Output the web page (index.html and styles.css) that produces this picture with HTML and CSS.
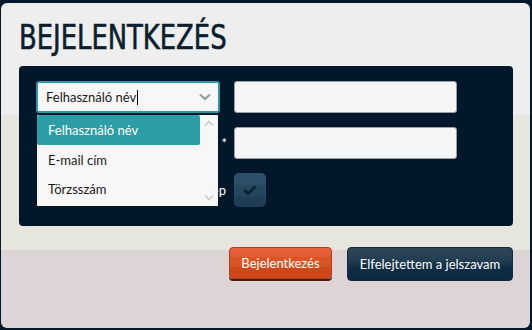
FILE: index.html
```html
<!DOCTYPE html>
<html lang="hu">
<head>
    <meta charset="UTF-8">
    <title>Bejelentkezés</title>
    <link rel="stylesheet" href="styles.css">
</head>
<body>
    <div class="login-panel">
        <h1 class="login-title"><span>BEJELENTKEZÉS</span></h1>

        <div class="login-box">
            <div class="login-row">
                <div class="select-wrap">
                    <div class="select-field">
                        <span>Felhasználó név</span><span class="caret"></span>
                        <svg class="select-arrow" width="12" height="8" viewBox="0 0 12 8">
                            <path d="M1 1.5 L6 6 L11 1.5" fill="none" stroke="#8e9c9c" stroke-width="2.2"/>
                        </svg>
                    </div>
                    <!-- open list of the select -->
                    <ul class="select-list">
                        <li class="selected">Felhasználó név</li>
                        <li>E-mail cím</li>
                        <li>Törzsszám</li>
                        <svg class="scroll-up" width="10" height="7" viewBox="0 0 10 7">
                            <path d="M1 5.5 L5 1.5 L9 5.5" fill="none" stroke="#c9cccc" stroke-width="1.6"/>
                        </svg>
                        <svg class="scroll-down" width="10" height="7" viewBox="0 0 10 7">
                            <path d="M1 1.5 L5 5.5 L9 1.5" fill="none" stroke="#c9cccc" stroke-width="1.6"/>
                        </svg>
                    </ul>
                </div>
                <input class="text-input" type="text">
            </div>

            <div class="login-row">
                <label class="row-label">Jelszó <span class="req">*</span></label>
                <input class="text-input" type="password">
            </div>

            <div class="login-row">
                <label class="row-label">Automatikus belep</label>
                <div class="check-box">
                    <svg width="14" height="10" viewBox="0 0 14 10">
                        <path d="M1.5 5 L5 8.5 L12.5 1.5" fill="none" stroke="#0b2234" stroke-width="3"/>
                    </svg>
                </div>
            </div>
        </div>

        <div class="button-row">
            <button class="btn btn-login">Bejelentkezés</button>
            <button class="btn btn-forgot">Elfelejtettem a jelszavam</button>
        </div>
    </div>
</body>
</html>
```

FILE: styles.css
```css
body {
    margin: 0;
    background-color: #03182a;
    font-family: Lato, 'Open Sans', sans-serif;
}

.login-panel {
    margin: 3px 2px 2px 1px;
    height: 325px;
    box-sizing: border-box;
    padding: 0 17px 0 18px;
    border-radius: 6px;
    background: linear-gradient(to bottom, #eeeeee 0, #eeeeee 112px, #e6e5de 112px, #e6e5de 247px, #ddd5d5 247px);
}

.login-title {
    margin: 0;
    padding-top: 14px;
    height: 49px;
    font-family: 'DejaVu Sans Condensed', 'DejaVu Sans', sans-serif;
    font-size: 34px;
    font-weight: normal;
    -webkit-text-stroke: 0.6px #0b1e2e;
    color: #0b1e2e;
    line-height: 40px;
}

.login-title span {
    display: inline-block;
    transform: scaleX(0.845);
    transform-origin: left center;
}

.login-box {
    display: flex;
    flex-direction: column;
    gap: 14px;
    padding: 15px 56px 19px 17px;
    border-radius: 4px;
    background-color: #02182a;
}

.login-row {
    display: grid;
    grid-template-columns: 190px 223px;
    gap: 8px;
    align-items: center;
}

.row-label {
    text-align: right;
    color: #ffffff;
    font-size: 13px;
}

.req {
    margin-right: -1px;
}

.text-input {
    height: 32px;
    box-sizing: border-box;
    border: 1px solid #9a9fa3;
    border-radius: 3px;
    background-color: #f5f5f5;
}

.select-wrap {
    position: relative;
    width: 184px;
}

.select-field {
    display: flex;
    align-items: center;
    height: 32px;
    box-sizing: border-box;
    padding-left: 8px;
    border: 2px solid #2b9aa1;
    border-radius: 3px;
    background-color: #f7f7f7;
    font-size: 13px;
    color: #1a1a1a;
}

.caret {
    display: inline-block;
    width: 1px;
    height: 15px;
    margin-left: 1px;
    background-color: #000;
}

.select-arrow {
    margin-left: auto;
    margin-right: 7px;
}

.select-list {
    position: absolute;
    top: 34px;
    left: 1px;
    width: 181px;
    height: 91px;
    margin: 0;
    padding: 0;
    list-style: none;
    background-color: #f7f7f7;
    font-size: 13px;
    color: #1a1a1a;
}

.select-list li {
    height: 29.5px;
    width: 163px;
    box-sizing: border-box;
    padding-left: 11px;
    line-height: 31px;
}

.select-list li.selected {
    background-color: #2c9ea7;
    color: #ffffff;
    border-radius: 2px;
}

.scroll-up {
    position: absolute;
    top: 5px;
    right: 4px;
}

.scroll-down {
    position: absolute;
    bottom: 5px;
    right: 4px;
}

.check-box {
    width: 32px;
    height: 34px;
    display: flex;
    align-items: center;
    justify-content: center;
    border-radius: 5px;
    background: linear-gradient(to bottom, #2e506a 0, #2b4d66 35%, #264861 35%, #22445c 70%, #1f3e55 70%);
}

.button-row {
    display: flex;
    justify-content: flex-end;
    gap: 15px;
    padding-top: 21px;
}

.btn {
    height: 32px;
    padding: 0 0 1px;
    border-radius: 4px;
    font-family: Lato, 'Open Sans', sans-serif;
    font-size: 13px;
    white-space: nowrap;
    color: #ffffff;
    cursor: pointer;
}

.btn-login {
    width: 103px;
    border: 1px solid #a8411c;
    box-shadow: 0 2px 0 #4e1807;
    background: linear-gradient(to bottom, #e8613a 0, #e55b32 30%, #da5526 30%, #d95425 65%, #cf4719 65%);
}

.btn-forgot {
    width: 166px;
    height: 34px;
    border: 1px solid #16293a;
    background: linear-gradient(to bottom, #2f4657 0, #223d50 40%, #0f2d44 60%, #0a2840 100%);
}
```
